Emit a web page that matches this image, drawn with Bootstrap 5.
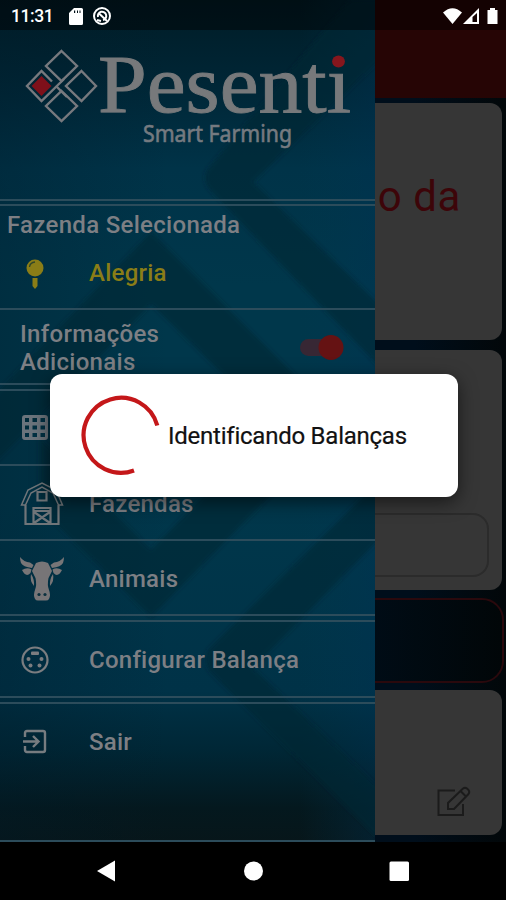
<!DOCTYPE html>
<html lang="pt-BR">
<head>
<meta charset="utf-8">
<meta name="viewport" content="width=device-width, initial-scale=1">
<title>Pesenti Smart Farming</title>
<link rel="stylesheet" href="https://cdn.jsdelivr.net/npm/bootstrap@5.3.0/dist/css/bootstrap.min.css">
<style>
body{background:#000;font-family:Roboto,"Liberation Sans",sans-serif;color:#7d7f84}
svg{display:block;flex-shrink:0}
.screen{width:506px;height:900px;background:#000}
.app-main{height:842px;background:linear-gradient(90deg,#000e1b 0,#000e1b 82%,#020709 100%)}
.app-header{height:98px;background:#260505}
.panels{padding:5px 4px 0 0}
.panel-box{background:#363636;border-radius:0 12px 12px 0;width:502px}
.p1{height:237px;margin-bottom:10px;padding:66px 41px 0 0;font-size:42px;line-height:56px;color:#3d0509;text-align:right;letter-spacing:.6px}
.p2{height:240px;margin-bottom:8px;padding:163px 13px 13px 0}
.field{height:64px;border:2px solid #2b2b2b;border-radius:0 16px 16px 0}
.p3{height:85px;width:504px;margin-bottom:7px;border:2px solid #2a090d;border-radius:0 22px 22px 0;background:linear-gradient(90deg,#000d18 70%,#010608 100%)}
.p4{height:145px;padding:0 31px 17px 0}
.drawer{width:375px;height:842px;background:#003548}
.drawer-art{z-index:0}
.drawer-body{z-index:1;padding-top:30px}
.status{height:30px;z-index:3;background:rgba(0,0,0,.45);color:#fff;font-size:17.5px;font-weight:500;padding:2px 7px 0 11px}
.status span{letter-spacing:-.4px}
.rule{border-bottom:2px solid #2c4c5b}
.logo-row{height:171px}
.gap-row{height:6px}
.gap-row.tight{height:5px}
.item{font-size:24px;font-weight:500;letter-spacing:.25px;padding-left:20px}
.item .ico{width:69px}
.farm{height:104px;padding-top:5px;font-size:24px;font-weight:500;line-height:29px}
.farm .title{padding-left:7px;letter-spacing:.3px}
.farm .item{height:67px;color:#8a7d17}
.info{height:75px;font-size:24px;font-weight:500;line-height:28px;padding:10px 31px 0 20px;letter-spacing:.3px}
.toggle{width:44px;height:26px;margin-top:14px}
.r1,.r2,.r3{height:75px}.r4{height:76px}.r5{height:138px}
.r2,.r3,.r4{padding-top:2px}
.r5 .inner{height:75px}
.dialog-box{left:50px;top:374px;width:408px;height:123px;background:#fff;border-radius:12px;color:#111;font-size:24px;z-index:5;padding-left:30px;box-shadow:0 5px 18px rgba(0,0,0,.55)}
.dialog-box span{margin-left:6px;white-space:nowrap;letter-spacing:-.24px;-webkit-text-stroke:.2px #111}
.sysbar{height:58px;background:#000}
</style>
<script src="https://cdn.jsdelivr.net/npm/bootstrap@5.3.0/dist/js/bootstrap.bundle.min.js"></script>
</head>
<body>
<div class="screen position-relative overflow-hidden">
  <main class="app-main">
    <div class="app-header"></div>
    <div class="panels">
      <div class="panel-box p1">o da</div>
      <div class="panel-box p2"><div class="field"></div></div>
      <div class="p3"></div>
      <div class="panel-box p4 d-flex justify-content-end align-items-end">
        <svg width="35" height="32" viewBox="0 0 35 32" fill="none" stroke="#1b1b1b" stroke-width="2"><path d="M19 4.500H2.500V29H27V18"/><path d="M12 23V17L27 2.500Q29 1 31 2.500L32.500 4Q34 6 32.500 8L18 23ZM24.500 5L30 10.500"/></svg>
      </div>
    </div>
  </main>

  <aside class="drawer position-absolute top-0 start-0 overflow-hidden">
    <svg class="drawer-art position-absolute top-0 start-0" width="375" height="842" viewBox="0 0 375 842">
      <defs>
        <linearGradient id="base" x2="0" y2="1"><stop offset="0" stop-color="#001c26"/><stop offset=".1" stop-color="#002636"/><stop offset=".2" stop-color="#003348"/><stop offset=".34" stop-color="#00374b"/><stop offset=".6" stop-color="#00374b"/><stop offset=".82" stop-color="#003247"/><stop offset=".89" stop-color="#002736"/><stop offset=".96" stop-color="#04181e"/><stop offset="1" stop-color="#07161a"/></linearGradient>
        <linearGradient id="side"><stop offset="0" stop-color="#001a28" stop-opacity=".3"/><stop offset=".45" stop-color="#001a28" stop-opacity="0"/><stop offset=".8" stop-color="#003a55" stop-opacity="0"/><stop offset="1" stop-color="#003355" stop-opacity=".35"/></linearGradient>
        <filter id="soft"><feGaussianBlur stdDeviation="2"/></filter>
      </defs>
      <rect width="375" height="842" fill="url(#base)"/>
      <rect width="375" height="842" fill="url(#side)"/>
      <g fill="#0a2430" fill-opacity=".6" filter="url(#soft)">
        <path d="M350 0L207 170Q202 180 210 190L390 378V315L253 182L390 50V0Z"/>
        <path d="M151 232L-10 400V468L151 304L290 440H360Z"/>
        <path d="M40 508L151 617L325 440H258L151 550L40 438Z"/>
        <path d="M390 470L208 650Q202 660 210 672L390 850V798L253 668L390 528Z"/>
      </g>
    </svg>
    <div class="drawer-body position-relative">
      <div class="logo-row rule">
        <svg width="375" height="169" viewBox="0 30 375 169">
          <g fill="none" stroke="#77797e" stroke-width="2.400">
            <path d="M61.500 51L77 66L61.500 81L46 66Z"/><path d="M81.500 71L96 86L81.500 101L66 86Z"/><path d="M61.500 91L77 106L61.500 121L46 106Z"/>
            <path d="M52 81.500L41.500 71L27 86L41.500 101L64 79"/><path d="M56 86L67 97"/>
          </g>
          <path d="M41.500 76L51.500 86L41.500 96L31.500 86Z" fill="#7e101a"/>
          <text x="98" y="112" font-family="Liberation Serif,serif" font-size="83" textLength="253" lengthAdjust="spacingAndGlyphs" fill="#77797b" stroke="#77797b" stroke-width=".9">Pesenti</text>
          <ellipse cx="338.500" cy="61.500" rx="6.400" ry="6" fill="#86161d"/>
          <text x="143" y="142" font-family="Noto Sans,sans-serif" font-size="23" textLength="149" lengthAdjust="spacingAndGlyphs" fill="#757a80" stroke="#757a80" stroke-width=".6">Smart Farming</text>
        </svg>
      </div>
      <div class="gap-row tight rule"></div>
      <div class="farm rule">
        <div class="title">Fazenda Selecionada</div>
        <div class="item d-flex align-items-center">
          <div class="ico"><svg width="30" height="32" viewBox="0 0 30 32"><circle cx="15" cy="10" r="8.500" fill="#8a7d17"/><path d="M9.500 9Q10 4.500 15 4" fill="none" stroke="#314629" stroke-width="1.300"/><path d="M12.500 20H17.500V28L15 31L12.500 28Z" fill="#8a7d17"/></svg></div>
          <div>Alegria</div>
        </div>
      </div>
      <div class="info rule d-flex justify-content-between">
        <div>Informações<br>Adicionais</div>
        <svg class="toggle" viewBox="0 0 44 26"><rect x="0" y="5" width="38" height="17" rx="8.500" fill="#372734"/><circle cx="31" cy="13.500" r="12.500" fill="#651213"/></svg>
      </div>
      <div class="gap-row rule"></div>
      <div class="item r1 rule d-flex align-items-center">
        <div class="ico"><svg width="30" height="26" viewBox="0 0 30 26"><path fill="#6b747c" fill-rule="evenodd" d="M5 0H25Q28 0 28 3V22Q28 25 25 25H5Q2 25 2 22V3Q2 0 5 0ZM5 3V7H9V3ZM12.500 3V7H17V3ZM20.500 3V7H25V3ZM5 10.500V14.500H9V10.500ZM12.500 10.500V14.500H17V10.500ZM20.500 10.500V14.500H25V10.500ZM5 18V22H9V18ZM12.500 18V22H17V18ZM20.500 18V22H25V18Z"/></svg></div>
      </div>
      <div class="item r2 rule d-flex align-items-center">
        <div class="ico"><svg width="44" height="46" viewBox="0 0 44 46" fill="none" stroke="#707579" stroke-width="2.200"><path d="M5.500 24V43H38.500V24"/><path d="M5.500 24H1.500L8 9L22 2L36 9L42.500 24H38.500M5.500 24L11 12L22 6L33 12L38.500 24" stroke-width="1.500"/><path d="M17.500 11H26.500V19.500H17.500ZM13.500 43V27H30.500V43M13.500 30H30.500M14 31L30 42M30 31L14 42"/></svg></div>
        <div>Fazendas</div>
      </div>
      <div class="item r3 rule d-flex align-items-center">
        <div class="ico"><svg width="44" height="46" viewBox="0 0 44 46" fill="#777577"><path d="M0 1Q4 6 10 6.500L13.500 9L12 12Q3 11 1 7Q0 4 0 1ZM44 1Q40 6 34 6.500L30.500 9L32 12Q41 11 43 7Q44 4 44 1Z"/><path d="M2 14Q7 11 11.500 13.500L10.500 17Q6 22 2 14ZM42 14Q37 11 32.500 13.500L33.500 17Q38 22 42 14Z"/><path d="M16 7Q22 4 28 7L32 15L28.500 22Q27 29 29 34Q31 39 29 43Q28 44.500 26 44.500H18Q16 44.500 15 43Q13 39 15 34Q17 29 15.500 22L12 15Z"/><path d="M11 18Q14.500 23 14 30Q9.500 25 11 18ZM33 18Q29.500 23 30 30Q34.500 25 33 18Z"/><g fill="#0b303e"><circle cx="19" cy="38.500" r="1.600"/><circle cx="25" cy="38.500" r="1.600"/></g></svg></div>
        <div>Animais</div>
      </div>
      <div class="gap-row rule"></div>
      <div class="item r4 rule d-flex align-items-center">
        <div class="ico"><svg width="30" height="30" viewBox="0 0 30 30"><circle cx="15" cy="15" r="12.500" fill="none" stroke="#7b7d80" stroke-width="2.200"/><g fill="#7b7d80"><rect x="11" y="6.500" width="8" height="3.500" rx="1"/><circle cx="8.500" cy="14" r="2"/><circle cx="21.500" cy="14" r="2"/><circle cx="10.500" cy="20.500" r="2"/><circle cx="19.500" cy="20.500" r="2"/></g></svg></div>
        <div>Configurar Balança</div>
      </div>
      <div class="gap-row rule"></div>
      <div class="r5 rule">
        <div class="item inner d-flex align-items-center">
          <div class="ico"><svg width="30" height="26" viewBox="0 0 30 26" fill="none" stroke="#777c80" stroke-width="2.400"><path d="M5 8V4Q5 2 7 2H23Q25 2 25 4V21Q25 23 23 23H7Q5 23 5 21V17M3 12.500H18M13 7L18.500 12.500L13 18"/></svg></div>
          <div>Sair</div>
        </div>
      </div>
    </div>
  </aside>

  <div class="status position-absolute top-0 start-0 w-100 d-flex align-items-center">
    <span>11:31</span>
    <svg class="ms-3" width="14" height="17" viewBox="0 0 14 17"><path fill="#fff" fill-rule="evenodd" d="M5 0H12.500Q14 0 14 1.500V15.500Q14 17 12.500 17H1.500Q0 17 0 15.500V5ZM5 2.500V5H6.200V2.500ZM8 2.500V5H9V2.500ZM10.500 2.500V5H11.500V2.500Z"/></svg>
    <svg class="ms-1" width="24" height="20" viewBox="0 0 24 20" fill="none" stroke="#fff" stroke-width="2"><circle cx="15" cy="10" r="8"/><path d="M11 11A4.200 4.200 0 1 1 16 14M11.500 7L20 15"/><path d="M10 14L14 15"/></svg>
    <div class="d-flex ms-auto align-items-center">
      <svg width="56" height="18" viewBox="0 0 56 18" fill="#fff"><path d="M0 5.500Q9.500 -3 19 5.500L9.500 17Z"/><path fill-rule="evenodd" d="M36 1V17H20ZM29.500 10V15H34V6Z"/><path d="M47 1H52V3H54.500V17H44.500V3H47Z"/></svg>
    </div>
  </div>

  <nav class="sysbar">
    <svg width="506" height="58" viewBox="0 0 506 58" fill="#fff"><path d="M97 29L115 18.500V39.500Z"/><circle cx="253.500" cy="29" r="9.500"/><rect x="389.500" y="19.500" width="19.500" height="19.500" rx="1.500"/></svg>
  </nav>

  <div class="dialog-box position-absolute d-flex align-items-center" role="dialog">
    <svg width="82" height="82" viewBox="0 0 82 82"><path d="M77.300 30.500A37.500 37.500 0 1 0 54 75.500" fill="none" stroke="#c41719" stroke-width="4.200"/></svg>
    <span>Identificando Balanças</span>
  </div>
</div>
</body>
</html>
